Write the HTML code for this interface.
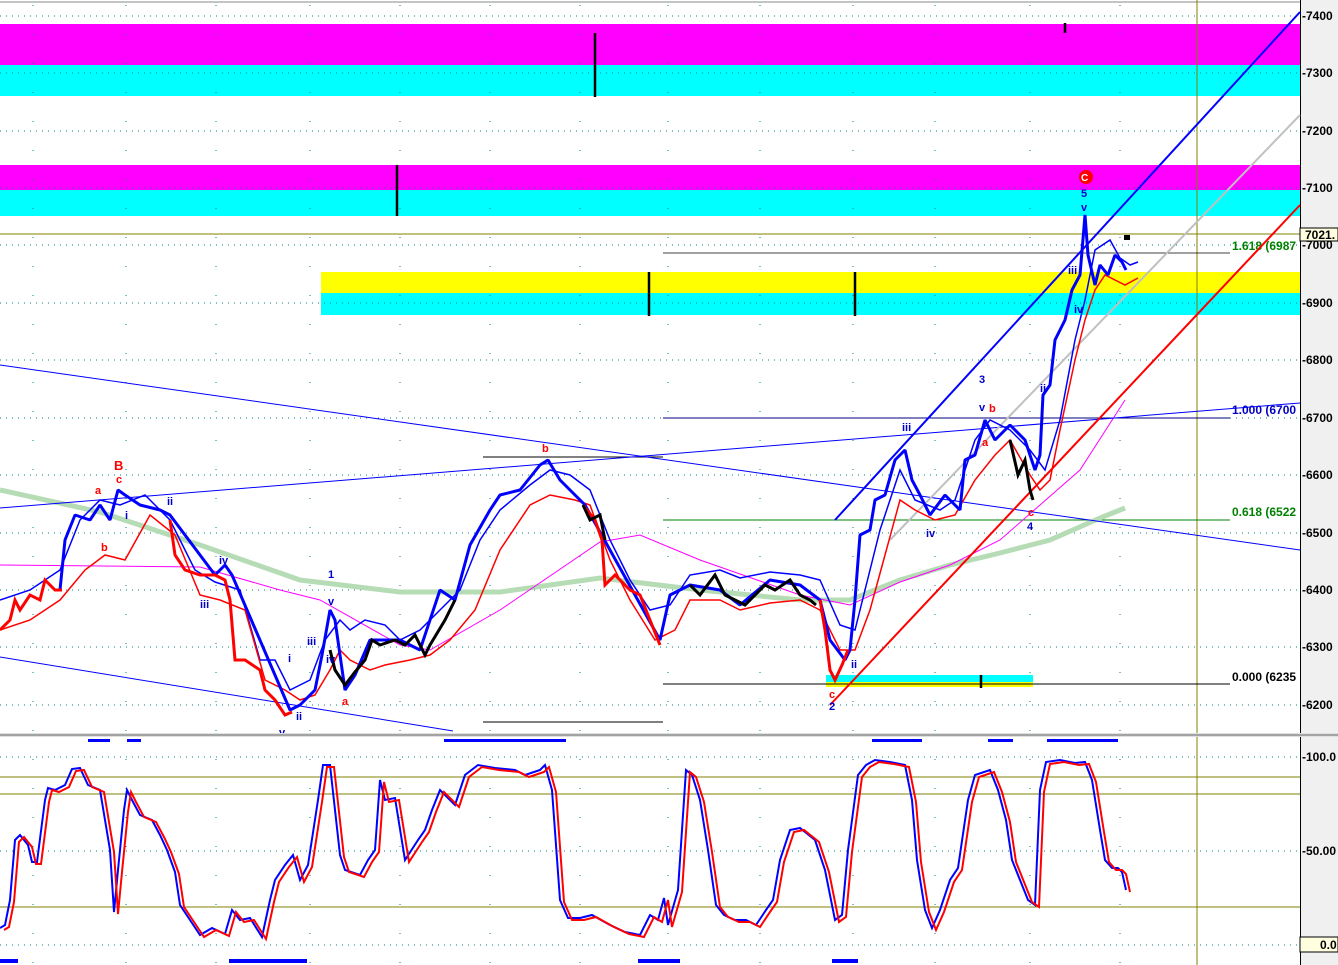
<!DOCTYPE html>
<html><head><meta charset="utf-8"><style>
html,body{margin:0;padding:0;background:#fff;width:1338px;height:965px;overflow:hidden}
svg{display:block}
text{font-family:"Liberation Sans",Arial,sans-serif;font-weight:bold}
</style></head><body>
<svg width="1338" height="965" viewBox="0 0 1338 965" xmlns="http://www.w3.org/2000/svg">
<defs>
<polyline id="st" fill="none" points="0,928 5,925 10,900 15,840 20,835 28,845 32,862 37,862 45,800 48,788 55,790 65,785 72,769 80,768 88,785 100,790 110,850 114,912 118,870 124,810 127,790 132,800 140,815 152,820 160,835 167,850 175,872 180,905 190,920 200,935 212,928 225,934 232,910 240,920 250,918 262,937 270,900 275,880 285,865 293,855 300,880 308,865 318,800 323,765 330,765 340,855 345,870 360,875 368,860 375,850 380,780 385,800 395,798 405,860 418,840 425,830 432,810 440,790 450,800 455,805 465,775 478,765 495,768 515,770 525,775 540,770 545,765 552,790 560,900 568,918 580,918 592,915 610,925 625,932 640,935 650,915 658,920 664,898 668,925 678,890 686,770 692,775 700,800 708,850 716,905 724,915 735,920 746,920 756,925 766,910 773,900 780,860 790,830 800,828 815,840 825,870 835,920 842,915 848,850 858,775 866,765 875,760 890,762 905,765 912,800 917,860 925,910 932,928 940,910 950,880 958,868 968,800 975,775 990,770 998,790 1006,820 1012,860 1020,880 1028,900 1035,905 1040,790 1046,762 1060,760 1075,763 1085,762 1092,780 1100,830 1105,860 1112,868 1118,868 1122,872 1126,890"/>
</defs>
<rect width="1338" height="965" fill="#fff"/>
<rect x="1300" y="0" width="38" height="965" fill="#f0f0f0"/>
<line x1="1300.5" y1="0" x2="1300.5" y2="965" stroke="#000"/>
<line x1="0" y1="2" x2="1300" y2="2" stroke="#888"/>
<rect x="0" y="24" width="1300" height="41" fill="#ff00ff"/>
<rect x="0" y="65" width="1300" height="31" fill="#00ffff"/>
<rect x="0" y="165" width="1300" height="25" fill="#ff00ff"/>
<rect x="0" y="190" width="1300" height="26" fill="#00ffff"/>
<rect x="321" y="272" width="979" height="21" fill="#ffff00"/>
<rect x="321" y="293" width="979" height="22" fill="#00ffff"/>
<rect x="826" y="675" width="207" height="7" fill="#00ffff"/>
<rect x="826" y="682" width="207" height="5" fill="#ffff00"/>
<g stroke="#008080" stroke-width="1" stroke-dasharray="1,5">
<line x1="0" y1="16" x2="1300" y2="16"/><line x1="0" y1="73" x2="1300" y2="73"/>
<line x1="0" y1="131" x2="1300" y2="131"/><line x1="0" y1="188" x2="1300" y2="188"/>
<line x1="0" y1="245" x2="1300" y2="245"/><line x1="0" y1="303" x2="1300" y2="303"/>
<line x1="0" y1="360" x2="1300" y2="360"/><line x1="0" y1="418" x2="1300" y2="418"/>
<line x1="0" y1="475" x2="1300" y2="475"/><line x1="0" y1="533" x2="1300" y2="533"/>
<line x1="0" y1="590" x2="1300" y2="590"/><line x1="0" y1="647" x2="1300" y2="647"/>
<line x1="0" y1="705" x2="1300" y2="705"/>
<line x1="0" y1="757" x2="1300" y2="757"/><line x1="0" y1="851" x2="1300" y2="851"/><line x1="0" y1="945" x2="1300" y2="945"/>
</g>
<g stroke="#008080" stroke-width="1" stroke-dasharray="1,28">
<line x1="33" y1="5" x2="33" y2="965"/><line x1="126" y1="5" x2="126" y2="965"/><line x1="216" y1="5" x2="216" y2="965"/>
<line x1="310" y1="5" x2="310" y2="965"/><line x1="400" y1="5" x2="400" y2="965"/><line x1="490" y1="5" x2="490" y2="965"/>
<line x1="580" y1="5" x2="580" y2="965"/><line x1="668" y1="5" x2="668" y2="965"/><line x1="760" y1="5" x2="760" y2="965"/>
<line x1="853" y1="5" x2="853" y2="965"/><line x1="935" y1="5" x2="935" y2="965"/><line x1="1030" y1="5" x2="1030" y2="965"/>
<line x1="1120" y1="5" x2="1120" y2="965"/>
</g>
<line x1="1197" y1="0" x2="1197" y2="965" stroke="#808000"/>
<line x1="0" y1="234" x2="1300" y2="234" stroke="#808000"/>
<line x1="663" y1="253" x2="1230" y2="253" stroke="#000" stroke-width="0.8"/>
<line x1="663" y1="418" x2="1230" y2="418" stroke="#000080"/>
<line x1="663" y1="520" x2="1230" y2="520" stroke="#008000"/>
<line x1="663" y1="684" x2="1230" y2="684" stroke="#000"/>
<line x1="483" y1="457" x2="663" y2="457" stroke="#000"/>
<line x1="483" y1="722" x2="663" y2="722" stroke="#000"/>
<text x="1232" y="250" font-size="12" fill="#008000">1.618 (6987</text>
<text x="1232" y="414" font-size="12" fill="#0000c0">1.000 (6700</text>
<text x="1232" y="516" font-size="12" fill="#008000">0.618 (6522</text>
<text x="1232" y="681" font-size="12" fill="#000">0.000 (6235</text>
<polyline fill="none" stroke="#b5dcb5" stroke-width="5" points="0,490 100,512 200,545 300,580 400,592 500,592 600,578 700,590 800,600 850,600 900,580 950,565 1000,553 1050,540 1100,518 1125,508"/>
<polyline fill="none" stroke="#ff00ff" stroke-width="1" points="0,565 200,567 280,590 320,600 400,645 430,650 500,610 600,542 640,535 700,560 800,595 850,605 900,582 950,565 1000,540 1040,505 1080,470 1125,400"/>
<line x1="0" y1="365" x2="1300" y2="550" stroke="#0000ff"/>
<line x1="0" y1="508" x2="1300" y2="403" stroke="#0000ff"/>
<line x1="0" y1="657" x2="453" y2="731" stroke="#0000ff"/>
<line x1="835" y1="520" x2="1300" y2="12" stroke="#0000ff" stroke-width="2"/>
<line x1="890" y1="540" x2="1300" y2="115" stroke="#c0c0c0" stroke-width="2"/>
<line x1="830" y1="705" x2="1300" y2="205" stroke="#ff0000" stroke-width="2"/>
<polyline fill="none" stroke="#0000ff" stroke-width="1.5" points="0,600 30,590 60,570 80,520 100,500 120,505 145,495 170,520 195,570 215,582 240,590 260,660 275,660 290,690 310,680 325,640 340,620 350,630 365,620 385,625 400,640 420,630 440,610 460,590 480,540 500,510 530,485 550,470 570,475 590,490 610,540 630,580 650,610 670,605 690,575 720,570 740,578 770,572 800,575 820,580 840,625 855,630 865,590 880,530 900,470 915,500 940,510 955,500 975,440 990,420 1010,430 1030,450 1045,470 1060,420 1075,340 1085,300 1095,250 1110,240 1120,258 1130,265 1138,262"/>
<polyline fill="none" stroke="#ff0000" stroke-width="1.5" points="0,630 30,620 60,600 85,570 105,555 125,560 150,515 175,535 200,595 220,600 245,610 265,680 285,690 300,700 315,695 330,670 340,650 350,660 370,670 385,665 410,660 430,655 450,640 475,610 500,550 530,505 550,495 575,500 590,505 610,560 630,600 655,640 675,630 690,600 720,600 740,610 770,603 800,600 820,610 840,650 855,650 870,610 885,555 900,500 915,510 935,520 955,515 975,480 995,455 1010,440 1030,475 1040,490 1050,480 1060,430 1075,360 1085,320 1095,290 1105,275 1115,280 1125,285 1138,278"/>
<polyline fill="none" stroke="#0000ff" stroke-width="3" stroke-linejoin="bevel" points="60,590 65,540 75,515 90,520 100,505 110,520 118,490 125,495 140,505 160,510 170,515 215,575 225,565 232,575 290,710 300,705 315,690 322,655 330,610 335,620 345,690 355,675 370,640 400,640 420,650 440,590 455,600 470,545 490,510 500,495 520,490 540,465 548,460 560,480 585,505 660,640 670,595 690,585 720,590 740,605 770,580 800,585 820,600 830,640 845,660 850,650 855,600 860,535 870,530 875,500 885,495 895,460 905,450 912,480 920,495 930,515 945,495 960,510 965,460 975,455 985,420 995,440 1010,425 1025,440 1035,470 1040,455 1043,395 1050,385 1055,340 1065,320 1072,290 1080,275 1085,215 1088,255 1095,285 1100,265 1108,275 1115,255 1122,262 1126,270"/>
<g fill="none" stroke="#ff0000" stroke-width="3">
<polyline points="0,630 10,620 15,600 20,610 30,595 40,600 45,580 55,590 62,590"/>
<polyline points="170,520 175,555 185,570 200,575 215,575 225,580 230,600 235,660 245,660 260,670 265,690 275,700 285,715 292,712"/>
<polyline points="583,505 595,520 602,540 605,585 615,575 630,590 640,595 650,620 660,645"/>
<polyline points="820,600 825,630 830,670 835,680 842,665 848,650"/>
</g>
<g fill="none" stroke="#000" stroke-width="3">
<polyline points="330,650 335,670 345,685 355,672 365,660 372,640 380,645 395,640 405,645 415,635 425,655 430,645 445,620 455,600"/>
<polyline points="583,505 590,520 600,515 605,540"/>
<polyline points="690,585 700,595 715,575 725,595 745,605 765,585 775,590 790,580 800,595 810,600 816,605"/>
<polyline points="1010,440 1018,475 1025,460 1030,490 1033,500"/>
</g>
<g stroke="#000" stroke-width="2.5">
<line x1="595" y1="33" x2="595" y2="97"/><line x1="397" y1="165" x2="397" y2="216"/>
<line x1="649" y1="272" x2="649" y2="316"/><line x1="855" y1="272" x2="855" y2="316"/>
<line x1="981" y1="675" x2="981" y2="688"/><line x1="1065" y1="23" x2="1065" y2="33"/>
</g>
<rect x="1124" y="235" width="6" height="5" fill="#000"/>
<g font-size="11" fill="#ff0000">
<text x="114" y="470" font-size="13">B</text><text x="116" y="483">c</text><text x="95" y="494">a</text>
<text x="101" y="551">b</text><text x="342" y="705">a</text><text x="542" y="452">b</text>
<text x="989" y="412">b</text><text x="982" y="446">a</text><text x="1028" y="516">c</text><text x="829" y="698">c</text>
</g>
<g font-size="11" fill="#0000cc">
<text x="167" y="505">ii</text><text x="125" y="519">i</text><text x="219" y="564">iv</text><text x="200" y="608">iii</text>
<text x="328" y="578">1</text><text x="328" y="605">v</text><text x="307" y="645">iii</text><text x="326" y="663">iv</text>
<text x="288" y="662">i</text><text x="296" y="720">ii</text><text x="279" y="736">v</text>
<text x="902" y="431">iii</text><text x="926" y="537">iv</text><text x="979" y="383">3</text><text x="979" y="411">v</text>
<text x="1068" y="274">iii</text><text x="1074" y="313">iv</text><text x="1040" y="392">ii</text><text x="1041" y="420">i</text>
<text x="1081" y="197">5</text><text x="1081" y="211">v</text><text x="1027" y="530">4</text><text x="829" y="710">2</text>
<text x="851" y="668">ii</text>
</g>
<circle cx="1086" cy="177" r="7" fill="#ff0000"/>
<text x="1081" y="181" font-size="10" fill="#fff">C</text>
<rect x="0" y="733" width="1338" height="4" fill="#e0e0e0"/>
<line x1="0" y1="735" x2="1338" y2="735" stroke="#666"/>
<line x1="0" y1="777" x2="1300" y2="777" stroke="#808000"/>
<line x1="0" y1="794" x2="1300" y2="794" stroke="#808000"/>
<line x1="0" y1="907" x2="1300" y2="907" stroke="#808000"/>
<g fill="#0000ff">
<rect x="88" y="739" width="22" height="3"/><rect x="127" y="739" width="14" height="3"/><rect x="444" y="739" width="122" height="3"/>
<rect x="872" y="739" width="50" height="3"/><rect x="988" y="739" width="25" height="3"/><rect x="1047" y="739" width="71" height="3"/>
<rect x="0" y="959" width="18" height="4"/><rect x="229" y="959" width="78" height="4"/><rect x="638" y="959" width="42" height="4"/><rect x="832" y="959" width="26" height="4"/>
</g>
<use href="#st" stroke="#0000ff" stroke-width="2"/>
<use href="#st" transform="translate(4,2)" stroke="#ff0000" stroke-width="2"/>
<g font-size="12" fill="#000">
<text x="1302" y="20">-7400</text><text x="1302" y="77">-7300</text><text x="1302" y="135">-7200</text>
<text x="1302" y="192">-7100</text><text x="1302" y="249">-7000</text><text x="1302" y="307">-6900</text>
<text x="1302" y="364">-6800</text><text x="1302" y="422">-6700</text><text x="1302" y="479">-6600</text>
<text x="1302" y="537">-6500</text><text x="1302" y="594">-6400</text><text x="1302" y="651">-6300</text>
<text x="1302" y="709">-6200</text>
<text x="1302" y="761">-100.0</text><text x="1302" y="855">-50.00</text>
</g>
<rect x="1300" y="228" width="38" height="13" fill="#ffffe0" stroke="#000"/>
<text x="1305" y="239" font-size="12" fill="#000">7021.</text>
<rect x="1300" y="937" width="38" height="15" fill="#ffffe0" stroke="#000"/>
<text x="1320" y="949" font-size="12" fill="#000">0.0</text>
</svg>
</body></html>
